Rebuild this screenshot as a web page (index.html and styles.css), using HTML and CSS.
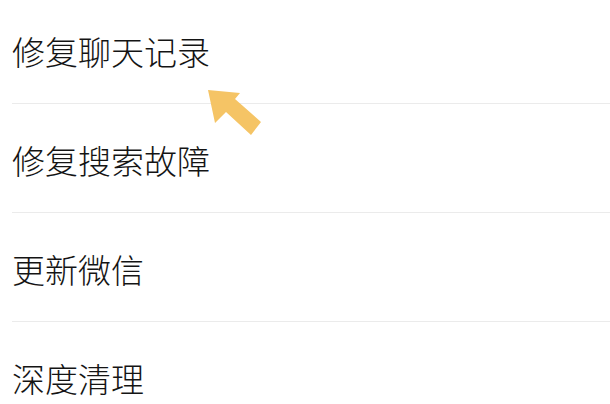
FILE: index.html
```html
<!DOCTYPE html>
<html lang="zh-CN">
<head>
  <meta charset="UTF-8">
  <meta name="viewport" content="width=device-width, initial-scale=1.0">
  <title>修复工具</title>
  <link rel="stylesheet" href="styles.css">
</head>
<body>

  <div class="menu">
    <ul class="menu-list">
      <li class="menu-item">修复聊天记录</li>
      <li class="menu-item">修复搜索故障</li>
      <li class="menu-item">更新微信</li>
      <li class="menu-item">深度清理</li>
    </ul>

    <!-- pointer arrow over the first row -->
    <svg class="hint-arrow" width="60" height="52" viewBox="205 87 60 52">
      <polygon points="208,90 240,93 235,99 261,122 251,135 226,112 215,123" fill="#f5c465"/>
    </svg>
  </div>

</body>
</html>
```

FILE: styles.css
```css
* {
  margin: 0;
  padding: 0;
  box-sizing: border-box;
}

body {
  background: #ffffff;
  font-family: "Noto Sans CJK SC", "Noto Sans", sans-serif;
  color: #141414;
  overflow: hidden;
}

.menu {
  position: relative;
  width: 610px;
  height: 404px;
  overflow: hidden;
}

.menu-list {
  list-style: none;
  margin-top: -5px;
  padding-left: 12px;
}

.menu-item {
  display: flex;
  align-items: center;
  height: 109px;
  border-bottom: 1px solid #ebebeb;
  font-size: 33px;
  font-weight: 300;
  padding-top: 3px;
}

.hint-arrow {
  position: absolute;
  left: 205px;
  top: 87px;
  pointer-events: none;
}
```
